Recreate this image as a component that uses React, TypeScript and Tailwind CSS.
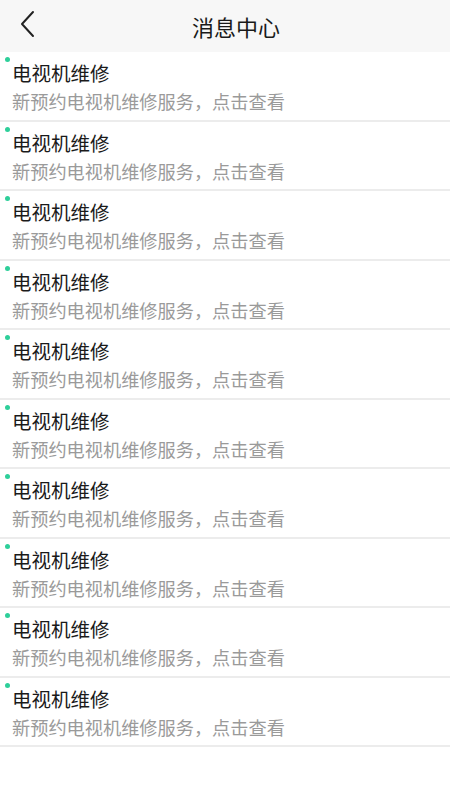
import React from "react";

const font = { fontFamily: '"Noto Sans CJK SC", "Noto Sans", sans-serif' };

export default function App() {
  const items = Array.from({ length: 10 });
  return (
    <div className="w-[450px] min-h-[800px] bg-white" style={font}>
      <div className="relative flex h-[52px] items-center justify-center bg-[#f7f7f7]">
        <svg className="absolute left-[18px] top-[10px]" width="20" height="30" viewBox="0 0 20 30">
          <path d="M15 2 L4 14 L15 26" fill="none" stroke="#222" strokeWidth="2" strokeLinecap="round" strokeLinejoin="round" />
        </svg>
        <span className="text-[22px] text-[#1a1a1a] leading-none ml-[22px]">消息中心</span>
      </div>
      {items.map((_, i) => (
        <div key={i} className="relative h-[69.5px] border-b-2 border-[#ececec] pl-[12px] pt-[7px]">
          <span className="absolute left-[5px] top-[5px] h-[5px] w-[5px] rounded-full bg-[#2ecf9a]" />
          <div className="text-[19.5px] leading-[28px] text-[#1a1a1a]">电视机维修</div>
          <div className="text-[18.2px] leading-[28px] text-[#9a9a9a]">新预约电视机维修服务，点击查看</div>
        </div>
      ))}
    </div>
  );
}
